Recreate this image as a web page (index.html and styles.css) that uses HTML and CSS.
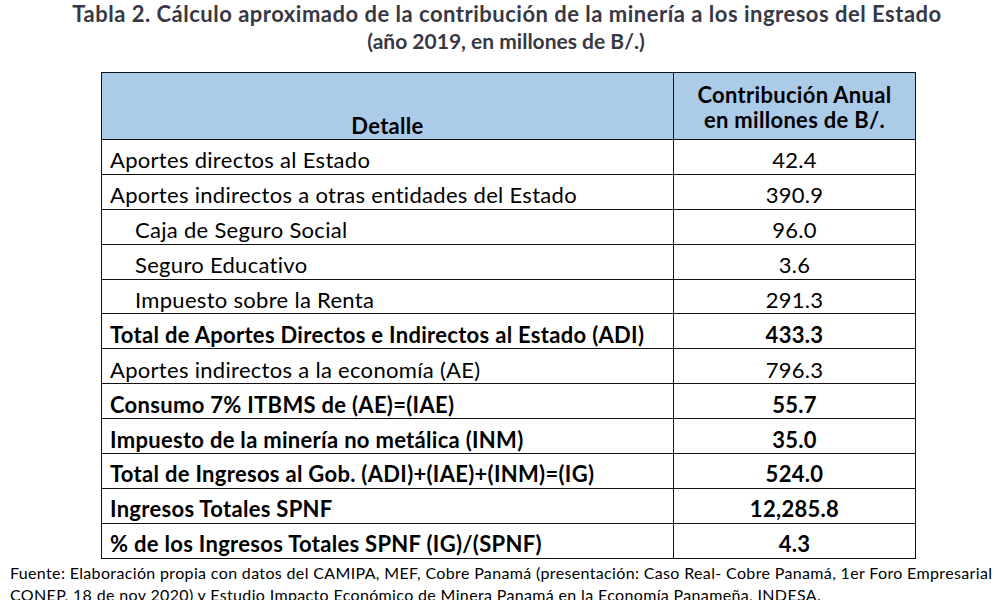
FILE: index.html
```html
<!DOCTYPE html>
<html lang="es">
<head>
<meta charset="utf-8">
<title>Tabla 2</title>
<link rel="stylesheet" href="styles.css">
</head>
<body>
<div class="page">
  <h1 class="title">Tabla 2. Cálculo aproximado de la contribución de la minería a los ingresos del Estado</h1>
  <p class="subtitle">(año 2019, en millones de B/.)</p>
  <table class="data">
    <colgroup>
      <col class="col-detail">
      <col class="col-value">
    </colgroup>
    <thead>
      <tr class="head">
        <th class="c-detail">Detalle</th>
        <th class="c-value">Contribución Anual<br>en millones de B/.</th>
      </tr>
    </thead>
    <tbody>
      <tr><td class="c-detail">Aportes directos al Estado</td><td class="c-value">42.4</td></tr>
      <tr><td class="c-detail">Aportes indirectos a otras entidades del Estado</td><td class="c-value">390.9</td></tr>
      <tr><td class="c-detail sub">Caja de Seguro Social</td><td class="c-value">96.0</td></tr>
      <tr><td class="c-detail sub">Seguro Educativo</td><td class="c-value">3.6</td></tr>
      <tr><td class="c-detail sub">Impuesto sobre la Renta</td><td class="c-value">291.3</td></tr>
      <tr class="bold"><td class="c-detail">Total de Aportes Directos e Indirectos al Estado (ADI)</td><td class="c-value">433.3</td></tr>
      <tr><td class="c-detail">Aportes indirectos a la economía (AE)</td><td class="c-value">796.3</td></tr>
      <tr class="bold"><td class="c-detail">Consumo 7% ITBMS de (AE)=(IAE)</td><td class="c-value">55.7</td></tr>
      <tr class="bold"><td class="c-detail">Impuesto de la minería no metálica (INM)</td><td class="c-value">35.0</td></tr>
      <tr class="bold"><td class="c-detail">Total de Ingresos al Gob. (ADI)+(IAE)+(INM)=(IG)</td><td class="c-value">524.0</td></tr>
      <tr class="bold"><td class="c-detail">Ingresos Totales SPNF</td><td class="c-value">12,285.8</td></tr>
      <tr class="bold"><td class="c-detail">% de los Ingresos Totales SPNF (IG)/(SPNF)</td><td class="c-value">4.3</td></tr>
    </tbody>
  </table>
  <p class="source">Fuente: Elaboración propia con datos del CAMIPA, MEF, Cobre Panamá (presentación: Caso Real- Cobre Panamá, 1er Foro Empresarial CONEP, 18 de nov 2020) y Estudio Impacto Económico de Minera Panamá en la Economía Panameña, INDESA.</p>
</div>
</body>
</html>
```
FILE: styles.css
```css
html, body {
  margin: 0;
  padding: 0;
  background: #ffffff;
}
.page {
  width: 1000px;
  height: 600px;
  overflow: hidden;
  font-family: Lato, "Open Sans", sans-serif;
  color: #000;
}
.title {
  margin: 0;
  text-align: center;
  font-size: 22px;
  line-height: 27px;
  font-weight: 700;
  letter-spacing: 0.5px;
  color: #383845;
  padding-left: 14px;
}
.subtitle {
  margin: 0;
  text-align: center;
  font-size: 21px;
  line-height: 27px;
  font-weight: 700;
  letter-spacing: 0;
  color: #383845;
  padding-left: 12px;
}
.data {
  margin: 18px 0 0 101px;
  width: 814px;
  table-layout: fixed;
  border-collapse: collapse;
  font-size: 22px;
  letter-spacing: 0.3px;
}
.col-detail {
  width: 572px;
}
.col-value {
  width: 242px;
}
.data th, .data td {
  border: 1px solid #111;
  padding: 0 8px;
  line-height: 24px;
}
.head th {
  background: #abcbe9;
  height: 59px;
  font-weight: 700;
  vertical-align: bottom;
  padding-bottom: 1px;
}
.head .c-value {
  line-height: 25px;
  padding-bottom: 7px;
}
.c-detail {
  text-align: left;
}
.head .c-detail {
  text-align: center;
}
.c-value {
  text-align: center;
}
.data tbody tr {
  height: 34.9px;
}
.data tbody td {
  vertical-align: middle;
  padding-top: 7px;
  padding-bottom: 0;
}
.data tbody .sub {
  padding-left: 33px;
}
.bold td {
  font-weight: 700;
}
.source {
  margin: 0;
  padding: 3px 0 0 10px;
  font-size: 16px;
  line-height: 22px;
  letter-spacing: 0.35px;
}
```
